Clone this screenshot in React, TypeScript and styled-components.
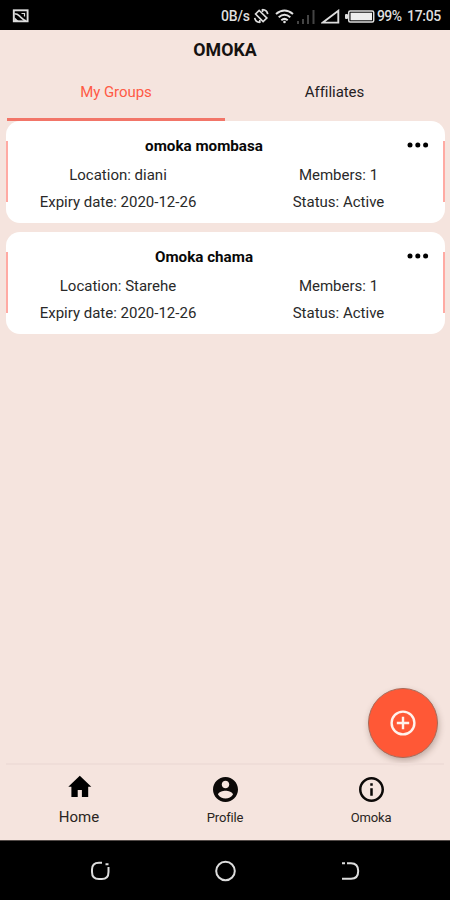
import React from "react";
import styled, { createGlobalStyle } from "styled-components";

const GlobalStyle = createGlobalStyle`
  * { box-sizing: border-box; }
  body { margin: 0; background: #f5e4de; }
`;

const Screen = styled.div`
  width: 450px;
  height: 900px;
  display: flex;
  flex-direction: column;
  background: #f5e4de;
  color: #151211;
  font-family: Roboto, sans-serif;
  overflow: hidden;
`;

const StatusBar = styled.header`
  height: 30px;
  flex: none;
  display: flex;
  align-items: center;
  padding: 2px 9px 0 12px;
  background: #000;
  color: #dedede;
  font-size: 14px;
  line-height: 16px;
  white-space: nowrap;
`;

const StatusText = styled.span<{ $width: number; $gap?: number; $spacing?: number }>`
  width: ${(p) => p.$width}px;
  margin-left: ${(p) => p.$gap ?? 0}px;
  letter-spacing: ${(p) => p.$spacing ?? 0}px;
  font-weight: 500;
`;

const StatusIcon = styled.svg<{ $gap?: number }>`
  display: block;
  flex: none;
  margin-left: ${(p) => p.$gap ?? 0}px;
`;

const Spacer = styled.div`
  flex: 1;
`;

const Title = styled.h1`
  margin: 0;
  height: 40px;
  flex: none;
  text-align: center;
  font-size: 17.8px;
  line-height: 40px;
  font-weight: 700;
  color: #151211;
`;

const Tabs = styled.nav`
  height: 51px;
  flex: none;
  display: grid;
  grid-template-columns: 218px 219px;
  padding-left: 7px;
`;

const Tab = styled.div<{ $active?: boolean }>`
  text-align: center;
  font-size: 15px;
  line-height: 45px;
  letter-spacing: -0.05px;
  color: ${(p) => (p.$active ? "#ff5a45" : "#24201e")};
  border-bottom: 3px solid ${(p) => (p.$active ? "#f27568" : "transparent")};
`;

const Groups = styled.main`
  flex: 1;
  display: flex;
  flex-direction: column;
  gap: 9px;
  padding: 0 5px 0 6px;
`;

const Card = styled.article`
  position: relative;
  height: 102px;
  padding: 10px 1px 0;
  border-radius: 14px;
  background: #fff;
  &::before, &::after {
    content: "";
    position: absolute;
    top: 20px;
    bottom: 21px;
    width: 2px;
    background: #ffaaa3;
  }
  &::before { left: 0; }
  &::after { right: 0; }
`;

const CardHeader = styled.div`
  height: 31px;
  display: flex;
  align-items: flex-start;
`;

const GroupName = styled.h2`
  margin: 0;
  width: 394px;
  text-align: center;
  font-size: 15.2px;
  line-height: 30px;
  font-weight: 700;
  color: #080808;
`;

const More = styled.button`
  margin: 11px 0 0 6px;
  padding: 0;
  border: 0;
  background: none;
  svg { display: block; }
`;

const Details = styled.div`
  display: grid;
  grid-template-columns: 222px 219px;
  grid-auto-rows: 27px;
`;

const Detail = styled.div`
  text-align: center;
  font-size: 15px;
  line-height: 27px;
  color: #292929;
  white-space: nowrap;
`;

const FabRow = styled.div`
  height: 76px;
  flex: none;
  display: flex;
  justify-content: flex-end;
  padding: 1px 12px 0 0;
`;

const Fab = styled.button`
  width: 70px;
  height: 70px;
  padding: 0;
  border: 1px solid #a86a59;
  border-radius: 50%;
  background: #ff5836;
  color: #fff2ed;
  display: grid;
  place-items: center;
  box-shadow: 1px 3px 6px rgba(70, 40, 30, 0.3);
`;

const BottomTabs = styled.nav`
  height: 77px;
  flex: none;
  display: grid;
  grid-template-columns: repeat(3, 146px);
  margin: 0 6px;
  border-top: 2px solid #efddd8;
`;

const BottomTab = styled.div<{ $large?: boolean }>`
  display: flex;
  flex-direction: column;
  align-items: center;
  padding-top: ${(p) => (p.$large ? 9 : 12)}px;
  gap: ${(p) => (p.$large ? 9 : 8)}px;
  font-size: ${(p) => (p.$large ? 15 : 13)}px;
  line-height: 16px;
  color: #2a2422;
  letter-spacing: ${(p) => (p.$large ? 0 : -0.15)}px;
  svg { display: block; }
`;

const SystemNav = styled.footer`
  height: 60px;
  flex: none;
  display: grid;
  grid-template-columns: repeat(3, 125px);
  justify-content: center;
  justify-items: center;
  align-items: center;
  background: #000;
  border-top: 1px solid #534b48;
`;

const groups = [
  { name: "omoka mombasa", location: "diani", expiry: "2020-12-26", members: 1, status: "Active" },
  { name: "Omoka chama", location: "Starehe", expiry: "2020-12-26", members: 1, status: "Active" },
];

export default function App() {
  return (
    <>
      <GlobalStyle />
      <Screen>
        <StatusBar>
          <StatusIcon width="17" height="14" viewBox="0 0 17 14" fill="none" stroke="#ddd">
            <rect x="1.8" y="1.3" width="13.8" height="11" strokeWidth="1.9" />
            <path d="M2.5 4.8c3.2 0 3.5.7 5.5 2.7s3.5 4 6 4.2" strokeWidth="1.6" />
            <path d="M2.5 8.2 7 12.5H2.5z" fill="#ddd" stroke="none" />
            <path d="M9.5 4.5h3v3" strokeWidth="1.2" />
          </StatusIcon>
          <Spacer />
          <StatusText $width={30} $spacing={-0.15}>0B/s</StatusText>
          <StatusIcon $gap={2} width="17" height="16" viewBox="0 0 17 16" fill="none" stroke="#ddd" strokeWidth="1.7">
            <path d="M6.2 2.5 13.8 10l-3.7 3.5L2.6 6z" />
            <path d="M9.5 1.6c3 .2 4.8 1.9 5.2 4.5M6.8 14.4c-3-.2-4.7-1.9-5.1-4.5M9.5 1v3M6.8 15v-3" />
          </StatusIcon>
          <StatusIcon $gap={5} width="19" height="15" viewBox="0 0 19 15" fill="none" stroke="#e2e2e2" strokeWidth="2">
            <path d="M1 5Q9.5-2 18 5M3.7 8.3q5.8-5 11.6 0M6.3 11.2q3.2-2.7 6.4 0" />
            <circle cx="9.5" cy="13" r="1.3" fill="#e2e2e2" stroke="none" />
          </StatusIcon>
          <StatusIcon $gap={3} width="19" height="15" viewBox="0 0 19 15" fill="#444">
            <path d="M0 12h2v3H0zM5 10h2v5H5zM10 6h2v9h-2zM15.5 1h2v14h-2z" />
          </StatusIcon>
          <StatusIcon $gap={5} width="19" height="15" viewBox="0 0 19 15" fill="none" stroke="#ddd" strokeWidth="1.9">
            <path d="M1.8 13.6 17.3 1.8v11.8z" />
          </StatusIcon>
          <StatusIcon $gap={5} width="30" height="13" viewBox="0 0 30 13">
            <rect x="0" y="4" width="3" height="5" rx="1" fill="#ddd" />
            <rect x="3.7" y="1" width="25" height="11" rx="1.5" fill="none" stroke="#ddd" strokeWidth="1.5" />
            <rect x="5.5" y="2.7" width="21.5" height="7.6" fill="#eee" />
          </StatusIcon>
          <StatusText $gap={2} $width={26} $spacing={-0.6}>99%</StatusText>
          <StatusText $gap={4} $width={34} $spacing={-0.3}>17:05</StatusText>
        </StatusBar>
        <Title>OMOKA</Title>
        <Tabs>
          <Tab $active>My Groups</Tab>
          <Tab>Affiliates</Tab>
        </Tabs>
        <Groups>
          {groups.map((g) => (
            <Card key={g.name}>
              <CardHeader>
                <GroupName>{g.name}</GroupName>
                <More aria-label="More">
                  <svg width="22" height="6" viewBox="0 0 22 6">
                    <circle cx="3" cy="3" r="2.5" />
                    <circle cx="10.8" cy="3" r="2.5" />
                    <circle cx="18.6" cy="3" r="2.5" />
                  </svg>
                </More>
              </CardHeader>
              <Details>
                <Detail>Location: {g.location}</Detail>
                <Detail>Members: {g.members}</Detail>
                <Detail>Expiry date: {g.expiry}</Detail>
                <Detail>Status: {g.status}</Detail>
              </Details>
            </Card>
          ))}
        </Groups>
        <FabRow>
          <Fab aria-label="Add group">
            <svg width="26" height="26" viewBox="0 0 26 26" fill="none" stroke="currentColor" strokeWidth="2.4">
              <circle cx="13" cy="13" r="11.4" />
              <path d="M13 6.8v12.4M6.8 13h12.4" />
            </svg>
          </Fab>
        </FabRow>
        <BottomTabs>
          <BottomTab $large>
            <svg width="26" height="26" viewBox="0 0 26 26" fill="#000">
              <path d="M13.8 1.8 2.3 12.8h3.1V23h6.3v-7h4.2v7h6.3V12.8h3.1z" />
            </svg>
            Home
          </BottomTab>
          <BottomTab>
            <svg width="25" height="25" viewBox="2 2 20 20" fill="#0c0908">
              <path d="M12 2C6.48 2 2 6.48 2 12s4.48 10 10 10 10-4.48 10-10S17.52 2 12 2zm0 3c1.66 0 3 1.34 3 3s-1.34 3-3 3-3-1.34-3-3 1.34-3 3-3zm0 14.2c-2.5 0-4.71-1.28-6-3.22.03-1.99 4-3.08 6-3.08 1.99 0 5.97 1.09 6 3.08-1.29 1.94-3.5 3.22-6 3.22z" />
            </svg>
            Profile
          </BottomTab>
          <BottomTab>
            <svg width="25" height="25" viewBox="2 2 20 20" fill="#0c0908">
              <path d="M11 7h2v2h-2zm0 4h2v6h-2zm1-9C6.48 2 2 6.48 2 12s4.48 10 10 10 10-4.48 10-10S17.52 2 12 2zm0 18c-4.41 0-8-3.59-8-8s3.59-8 8-8 8 3.59 8 8-3.59 8-8 8z" />
            </svg>
            Omoka
          </BottomTab>
        </BottomTabs>
        <SystemNav>
          <svg width="20" height="20" viewBox="0 0 20 20" fill="none" stroke="#ddd" strokeWidth="2">
            <path d="M12 1.7H9Q2 1.7 2 8.5v2.5q0 7 7 7h2.8q6.7 0 6.7-7V6M15.5 3.2h3" />
          </svg>
          <svg width="22" height="22" viewBox="0 0 22 22" fill="none" stroke="#ddd" strokeWidth="2">
            <circle cx="11.5" cy="11" r="9.3" />
          </svg>
          <svg width="20" height="20" viewBox="0 0 20 20" fill="none" stroke="#ddd" strokeWidth="2">
            <path d="M2 2.2h3M7 2.2h4q7.2 0 7.2 7.8t-7.2 7.8H2" />
          </svg>
        </SystemNav>
      </Screen>
    </>
  );
}
